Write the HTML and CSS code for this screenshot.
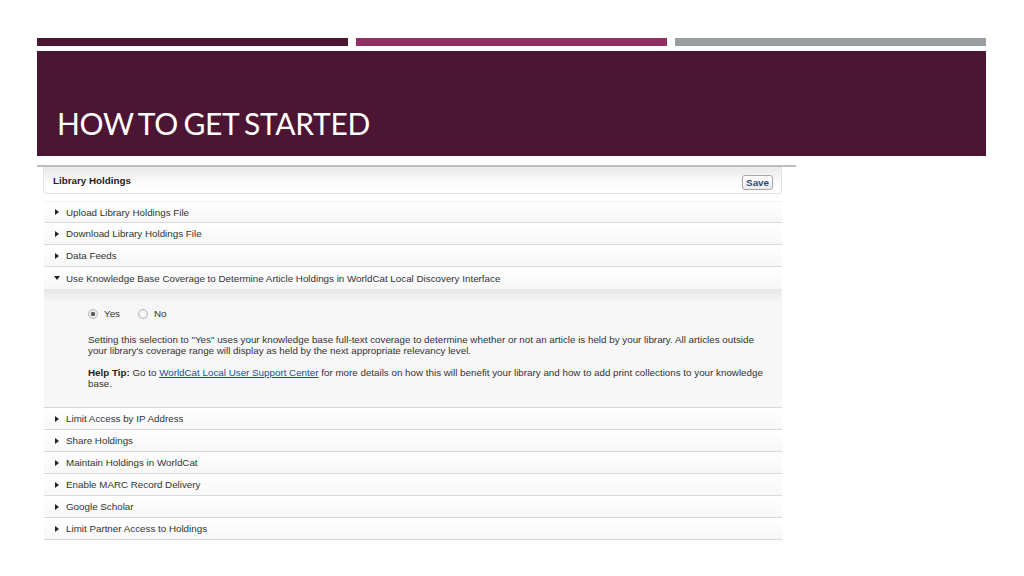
FILE: index.html
```html
<!DOCTYPE html>
<html lang="en">
<head>
  <meta charset="UTF-8">
  <title>How To Get Started</title>
  <link rel="stylesheet" href="styles.css">
</head>
<body>
  <div class="slide">
    <!-- Accent bars -->
    <div class="bars">
      <span class="bar bar-dark"></span>
      <span class="bar bar-plum"></span>
      <span class="bar bar-grey"></span>
    </div>

    <!-- Title banner -->
    <div class="banner">
      <h1>HOW TO GET STARTED</h1>
    </div>

    <!-- Screenshot of the settings page -->
    <div class="shot">
      <div class="panel-head">
        <span class="panel-title">Library Holdings</span>
        <button class="save">Save</button>
      </div>

      <ul class="sections">
        <li class="row"><span class="arrow"></span>Upload Library Holdings File</li>
        <li class="row"><span class="arrow"></span>Download Library Holdings File</li>
        <li class="row"><span class="arrow"></span>Data Feeds</li>
        <li class="row open"><span class="arrow down"></span>Use Knowledge Base Coverage to Determine Article Holdings in WorldCat Local Discovery Interface</li>
        <li class="detail">
          <div class="radios">
            <label><span class="radio checked"></span>Yes</label>
            <label><span class="radio"></span>No</label>
          </div>
          <p>Setting this selection to "Yes" uses your knowledge base full-text coverage to determine whether or not an article is held by your library. All articles outside your library's coverage range will display as held by the next appropriate relevancy level.</p>
          <p><b>Help Tip:</b> Go to <a href="#">WorldCat Local User Support Center</a> for more details on how this will benefit your library and how to add print collections to your knowledge base.</p>
        </li>
        <li class="row"><span class="arrow"></span>Limit Access by IP Address</li>
        <li class="row"><span class="arrow"></span>Share Holdings</li>
        <li class="row"><span class="arrow"></span>Maintain Holdings in WorldCat</li>
        <li class="row"><span class="arrow"></span>Enable MARC Record Delivery</li>
        <li class="row"><span class="arrow"></span>Google Scholar</li>
        <li class="row"><span class="arrow"></span>Limit Partner Access to Holdings</li>
      </ul>
    </div>
  </div>
</body>
</html>
```

FILE: styles.css
```css
/* Reset */
* { margin: 0; padding: 0; box-sizing: border-box; }
body {
  background: #fff;
  font-family: "Liberation Sans", Arial, sans-serif;
  color: #333;
}

.slide {
  width: 1024px;
  height: 576px;
  padding: 38px 38px 0 37px;
}

/* Accent bars */
.bars {
  display: flex;
  gap: 8px;
  height: 8px;
}
.bar { flex: 1; }
.bar-dark { background: #4d1534; }
.bar-plum { background: #922f62; }
.bar-grey { background: #999ea2; }

/* Banner */
.banner {
  margin-top: 5px;
  height: 105px;
  background: #4c1533;
  padding: 54px 0 0 20px;
}
.banner h1 {
  font-family: Lato, "Open Sans", sans-serif;
  font-weight: 400;
  font-size: 30px;
  letter-spacing: -0.3px;
  word-spacing: -2px;
  color: #fff;
  line-height: 36px;
}

/* Screenshot */
.shot {
  width: 759px;
  margin-top: 9px;
  border-top: 2px solid #bdbdbd;
  padding: 0 14px 0 6px;
}

.panel-head {
  height: 27px;
  display: flex;
  align-items: center;
  justify-content: space-between;
  padding: 0 8px 0 9px;
  border: 1px solid #e2e2e2;
  border-top: none;
  border-radius: 0 0 4px 4px;
  background: linear-gradient(#e9e9e9, #fbfbfb 60%, #fff);
}
.panel-title {
  font-size: 9.8px;
  font-weight: bold;
  color: #222;
  margin-top: 1px;
}
.save {
  font-family: "Liberation Sans", Arial, sans-serif;
  font-size: 9.8px;
  font-weight: bold;
  color: #2d4870;
  background: linear-gradient(#fff, #ececec);
  border: 1px solid #a9a9a9;
  border-radius: 3px;
  padding: 1px 3px;
  margin-top: 5px;
}

.sections {
  list-style: none;
  margin-top: 7px;
  margin-left: 1px;
}
.row {
  height: 22px;
  line-height: 21px;
  font-size: 9.8px;
  color: #333;
  padding-left: 9px;
  background: linear-gradient(#fff, #f7f7f7);
  border-bottom: 1px solid #d9d9d9;
  display: flex;
  align-items: center;
}
.row:first-child { border-top: 1px solid #f0f0f0; }
.row.open { border-bottom: none; }

.arrow {
  width: 0;
  height: 0;
  border-top: 3px solid transparent;
  border-bottom: 3px solid transparent;
  border-left: 4px solid #222;
  margin-right: 7px;
  margin-left: 2px;
}
.arrow.down {
  border-left: 3px solid transparent;
  border-right: 3px solid transparent;
  border-top: 4px solid #222;
  border-bottom: none;
  margin-left: 1px;
  margin-right: 6px;
}

/* Expanded section */
.detail {
  height: 119px;
  background: linear-gradient(#e6e6e6, #f6f6f7 12px, #f7f7f8);
  border-bottom: 1px solid #d9d9d9;
  padding: 19px 16px 0 44px;
  font-size: 9.8px;
  color: #333;
  line-height: 11px;
}
.radios {
  display: flex;
  gap: 18px;
  margin-bottom: 15px;
}
.radios label {
  display: flex;
  align-items: center;
  gap: 6px;
}
.radio {
  width: 10px;
  height: 10px;
  border-radius: 50%;
  border: 1px solid #b8b8b8;
  background: radial-gradient(#fff, #e4e4e4);
}
.radio.checked {
  background: radial-gradient(#555 0, #666 2px, #e8e8e8 2.5px, #f4f4f4);
}
.detail p { margin-bottom: 11px; }
.detail a { color: #1c4e97; text-decoration: underline; }
.detail b { color: #222; }
```
